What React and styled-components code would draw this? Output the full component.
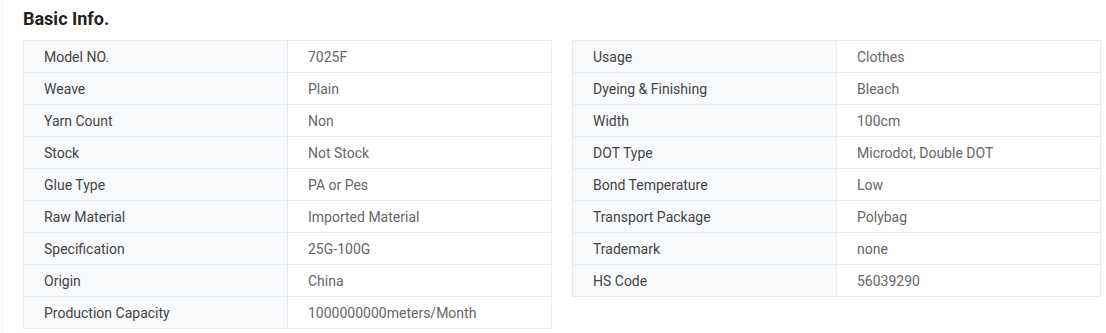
import React from 'react';
import styled, { createGlobalStyle } from 'styled-components';

const GlobalStyle = createGlobalStyle`
    body {
        margin: 0;
        background: #fff;
        font-family: Roboto, "Liberation Sans", sans-serif;
    }
`;

const Page = styled.div`
    padding-left: 2px;
    height: 333px;
`;

const Section = styled.div`
    border-left: 1px solid #eef0f2;
    height: 100%;
    padding: 8px 0 0 20px;
    box-sizing: border-box;
`;

const Title = styled.h2`
    margin: 0 0 10px;
    height: 22px;
    line-height: 22px;
    font-size: 18px;
    font-weight: 700;
    color: #222;
`;

const Tables = styled.div`
    display: flex;
    align-items: flex-start;
    gap: 20px;
`;

const Table = styled.div`
    display: grid;
    grid-template-columns: 264px 264px;
    border-top: 1px solid #e8ebef;
    border-left: 1px solid #e8ebef;
`;

const Cell = styled.div`
    height: 30px;
    padding-top: 1px;
    line-height: 30px;
    padding-left: 20px;
    font-size: 14px;
    border-right: 1px solid #e8ebef;
    border-bottom: 1px solid #e8ebef;
    background: ${(p) => (p.$label ? '#f8f9fb' : '#fff')};
    color: ${(p) => (p.$label ? '#444' : '#666')};
    white-space: nowrap;
`;

const left = [
    ['Model NO.', '7025F'],
    ['Weave', 'Plain'],
    ['Yarn Count', 'Non'],
    ['Stock', 'Not Stock'],
    ['Glue Type', 'PA or Pes'],
    ['Raw Material', 'Imported Material'],
    ['Specification', '25G-100G'],
    ['Origin', 'China'],
    ['Production Capacity', '1000000000meters/Month'],
];

const right = [
    ['Usage', 'Clothes'],
    ['Dyeing & Finishing', 'Bleach'],
    ['Width', '100cm'],
    ['DOT Type', 'Microdot, Double DOT'],
    ['Bond Temperature', 'Low'],
    ['Transport Package', 'Polybag'],
    ['Trademark', 'none'],
    ['HS Code', '56039290'],
];

function InfoTable({ rows }) {
    return (
        <Table>
            {rows.map(([k, v]) => (
                <React.Fragment key={k}>
                    <Cell $label>{k}</Cell>
                    <Cell>{v}</Cell>
                </React.Fragment>
            ))}
        </Table>
    );
}

export default function App() {
    return (
        <Page>
            <GlobalStyle />
            <Section>
                <Title>Basic Info.</Title>
                <Tables>
                    <InfoTable rows={left} />
                    <InfoTable rows={right} />
                </Tables>
            </Section>
        </Page>
    );
}
